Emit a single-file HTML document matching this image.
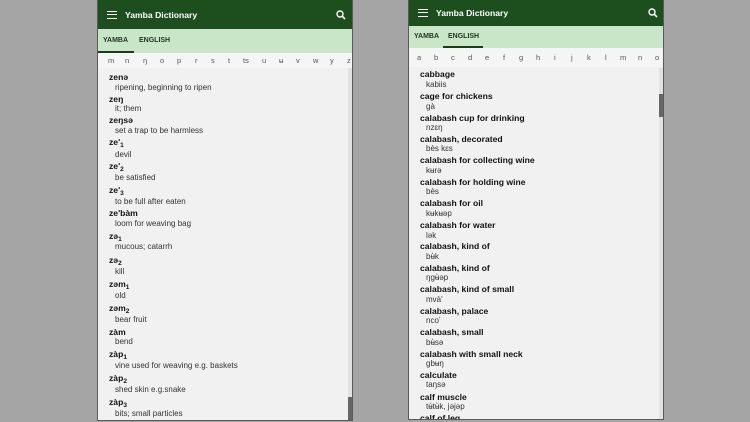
<!DOCTYPE html>
<html><head><meta charset="utf-8"><style>
*{margin:0;padding:0;box-sizing:border-box}
body{width:750px;height:422px;background:#a5a5a5;position:relative;overflow:hidden;font-family:"Liberation Sans","DejaVu Sans",sans-serif}
.ph{position:absolute;background:#f1f1f1;border:1px solid #5a5a5a;overflow:hidden}
.bar{position:absolute;left:0;right:0;top:0;background:#1c4f1d;color:#fff;font-weight:bold;font-size:8.6px}
.tabs{position:absolute;left:0;right:0;background:#c9e6c8;font-size:7px;font-weight:bold;color:#1f331f}
.letters{position:absolute;left:0;right:0;background:#f5f5f5;font-size:7.5px;color:#555}
.letters span{position:absolute}
.l{position:absolute;white-space:nowrap;line-height:10px}
.h{font-weight:bold;font-size:8.6px;color:#111}
.g{font-size:8px;color:#333}
sub{font-size:6.5px;vertical-align:-2px;line-height:0}
.ham{position:absolute;width:10px;height:8px;border-top:1.5px solid #fff;border-bottom:1.5px solid #fff}
.ham:after{content:"";position:absolute;left:0;right:0;top:1.8px;border-top:1.5px solid #fff}
</style></head><body>

<div class="ph" style="left:97px;top:-1px;width:256px;height:422px">
 <div class="bar" style="height:29px"><div class="ham" style="left:9px;top:11px"></div><span style="position:absolute;left:27px;top:10px">Yamba Dictionary</span>
 <svg style="position:absolute;left:238px;top:10px" width="10" height="10" viewBox="0 0 10 10"><circle cx="4" cy="4" r="3" fill="none" stroke="#fff" stroke-width="1.4"/><path d="M6.2 6.2L9 9" stroke="#fff" stroke-width="1.6"/></svg></div>
 <div class="tabs" style="top:29px;height:24px"><span style="position:absolute;left:5px;top:8px">YAMBA</span><span style="position:absolute;left:41px;top:8px">ENGLISH</span><div style="position:absolute;left:0;width:36px;bottom:0;height:2px;background:#1c3a1c"></div></div>
 <div class="letters" style="top:53px;height:15px">
  <span style="left:10px;top:3px">m</span><span style="left:27px;top:3px">n</span><span style="left:45px;top:3px">ŋ</span><span style="left:62px;top:3px">o</span><span style="left:79px;top:3px">p</span><span style="left:97px;top:3px">r</span><span style="left:113px;top:3px">s</span><span style="left:130px;top:3px">t</span><span style="left:145px;top:3px">ts</span><span style="left:164px;top:3px">u</span><span style="left:181px;top:3px">ʉ</span><span style="left:198px;top:3px">v</span><span style="left:215px;top:3px">w</span><span style="left:232px;top:3px">y</span><span style="left:249px;top:3px">z</span>
 </div>
 <div style="position:absolute;left:250px;top:68px;width:5px;height:354px;background:#e2e2e2"></div>
 <div style="position:absolute;left:250px;top:397px;width:4px;height:23px;background:#666"></div>
 <div class="l h" style="left:11px;top:72px">zenə</div>
 <div class="l g" style="left:17px;top:83px">ripening, beginning to ripen</div>
 <div class="l h" style="left:11px;top:94px">zeŋ</div>
 <div class="l g" style="left:17px;top:104px">it; them</div>
 <div class="l h" style="left:11px;top:115px">zeŋsə</div>
 <div class="l g" style="left:17px;top:126px">set a trap to be harmless</div>
 <div class="l h" style="left:11px;top:137px">ze'<sub>1</sub></div>
 <div class="l g" style="left:17px;top:150px">devil</div>
 <div class="l h" style="left:11px;top:161px">ze'<sub>2</sub></div>
 <div class="l g" style="left:17px;top:173px">be satisfied</div>
 <div class="l h" style="left:11px;top:185px">ze'<sub>3</sub></div>
 <div class="l g" style="left:17px;top:197px">to be full after eaten</div>
 <div class="l h" style="left:11px;top:208px">ze'bàm</div>
 <div class="l g" style="left:17px;top:219px">loom for weaving bag</div>
 <div class="l h" style="left:11px;top:231px">zə<sub>1</sub></div>
 <div class="l g" style="left:17px;top:242px">mucous; catarrh</div>
 <div class="l h" style="left:11px;top:255px">zə<sub>2</sub></div>
 <div class="l g" style="left:17px;top:267px">kill</div>
 <div class="l h" style="left:11px;top:279px">zəm<sub>1</sub></div>
 <div class="l g" style="left:17px;top:291px">old</div>
 <div class="l h" style="left:11px;top:303px">zəm<sub>2</sub></div>
 <div class="l g" style="left:17px;top:315px">bear fruit</div>
 <div class="l h" style="left:11px;top:327px">zàm</div>
 <div class="l g" style="left:17px;top:337px">bend</div>
 <div class="l h" style="left:11px;top:349px">zàp<sub>1</sub></div>
 <div class="l g" style="left:17px;top:361px">vine used for weaving e.g. baskets</div>
 <div class="l h" style="left:11px;top:373px">zàp<sub>2</sub></div>
 <div class="l g" style="left:17px;top:385px">shed skin e.g.snake</div>
 <div class="l h" style="left:11px;top:397px">zàp<sub>3</sub></div>
 <div class="l g" style="left:17px;top:409px">bits; small particles</div>
</div>

<div class="ph" style="left:408px;top:-1px;width:256px;height:421px">
 <div class="bar" style="height:26px"><div class="ham" style="left:9px;top:9px"></div><span style="position:absolute;left:27px;top:8px">Yamba Dictionary</span>
 <svg style="position:absolute;left:239px;top:8px" width="10" height="10" viewBox="0 0 10 10"><circle cx="4" cy="4" r="3" fill="none" stroke="#fff" stroke-width="1.4"/><path d="M6.2 6.2L9 9" stroke="#fff" stroke-width="1.6"/></svg></div>
 <div class="tabs" style="top:26px;height:22px"><span style="position:absolute;left:5px;top:7px">YAMBA</span><span style="position:absolute;left:39px;top:7px">ENGLISH</span><div style="position:absolute;left:34px;width:40px;bottom:0;height:2px;background:#1c3a1c"></div></div>
 <div class="letters" style="top:48px;height:19px">
  <span style="left:8px;top:5px">a</span><span style="left:25px;top:5px">b</span><span style="left:42px;top:5px">c</span><span style="left:59px;top:5px">d</span><span style="left:76px;top:5px">e</span><span style="left:94px;top:5px">f</span><span style="left:110px;top:5px">g</span><span style="left:127px;top:5px">h</span><span style="left:145px;top:5px">i</span><span style="left:162px;top:5px">j</span><span style="left:178px;top:5px">k</span><span style="left:196px;top:5px">l</span><span style="left:211px;top:5px">m</span><span style="left:229px;top:5px">n</span><span style="left:246px;top:5px">o</span>
 </div>
 <div style="position:absolute;left:250px;top:68px;width:5px;height:353px;background:#e2e2e2"></div>
 <div style="position:absolute;left:250px;top:94px;width:4px;height:23px;background:#666"></div>
 <div class="l h" style="left:11px;top:69px">cabbage</div>
 <div class="l g" style="left:17px;top:80px">kabiis</div>
 <div class="l h" style="left:11px;top:91px">cage for chickens</div>
 <div class="l g" style="left:17px;top:102px">gà</div>
 <div class="l h" style="left:11px;top:113px">calabash cup for drinking</div>
 <div class="l g" style="left:17px;top:123px">nzɛŋ</div>
 <div class="l h" style="left:11px;top:134px">calabash, decorated</div>
 <div class="l g" style="left:17px;top:144px">bès kɛs</div>
 <div class="l h" style="left:11px;top:155px">calabash for collecting wine</div>
 <div class="l g" style="left:17px;top:166px">kʉrə</div>
 <div class="l h" style="left:11px;top:177px">calabash for holding wine</div>
 <div class="l g" style="left:17px;top:187px">bès</div>
 <div class="l h" style="left:11px;top:198px">calabash for oil</div>
 <div class="l g" style="left:17px;top:209px">kʉkʉəp</div>
 <div class="l h" style="left:11px;top:220px">calabash for water</div>
 <div class="l g" style="left:17px;top:231px">lək</div>
 <div class="l h" style="left:11px;top:241px">calabash, kind of</div>
 <div class="l g" style="left:17px;top:252px">bʉ̀k</div>
 <div class="l h" style="left:11px;top:263px">calabash, kind of</div>
 <div class="l g" style="left:17px;top:273px">ŋgʉ̀əp</div>
 <div class="l h" style="left:11px;top:284px">calabash, kind of small</div>
 <div class="l g" style="left:17px;top:295px">mvà'</div>
 <div class="l h" style="left:11px;top:306px">calabash, palace</div>
 <div class="l g" style="left:17px;top:316px">ncoʼ</div>
 <div class="l h" style="left:11px;top:327px">calabash, small</div>
 <div class="l g" style="left:17px;top:338px">bʉ̀sə</div>
 <div class="l h" style="left:11px;top:349px">calabash with small neck</div>
 <div class="l g" style="left:17px;top:359px">gbʉŋ</div>
 <div class="l h" style="left:11px;top:370px">calculate</div>
 <div class="l g" style="left:17px;top:380px">taŋsə</div>
 <div class="l h" style="left:11px;top:392px">calf muscle</div>
 <div class="l g" style="left:17px;top:402px">tʉ́tʉ̀k, jəjəp</div>
 <div class="l h" style="left:11px;top:413px">calf of leg</div>
</div>
</body></html>
